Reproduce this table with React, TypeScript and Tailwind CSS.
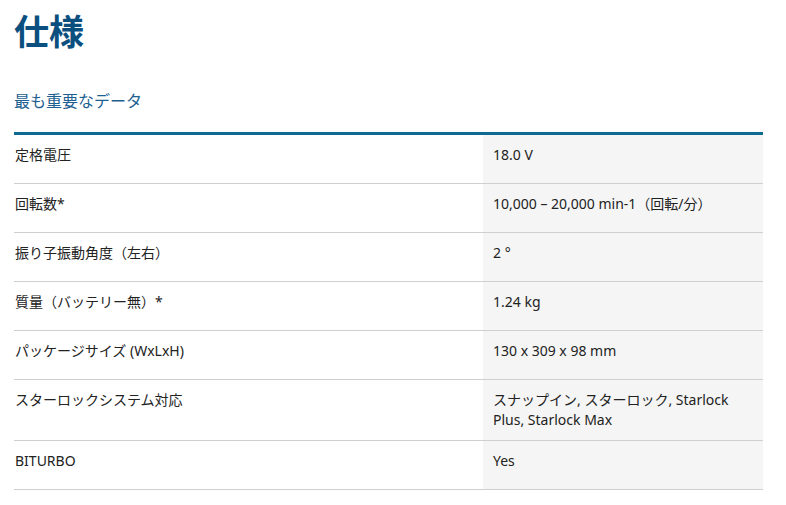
const rows: { label: string; value: string }[] = [
	{ label: "定格電圧", value: "18.0 V" },
	{ label: "回転数*", value: "10,000 – 20,000 min-1（回転/分）" },
	{ label: "振り子振動角度（左右）", value: "2 °" },
	{ label: "質量（バッテリー無）*", value: "1.24 kg" },
	{ label: "パッケージサイズ (WxLxH)", value: "130 x 309 x 98 mm" },
	{ label: "スターロックシステム対応", value: "スナップイン, スターロック, Starlock Plus, Starlock Max" },
	{ label: "BITURBO", value: "Yes" },
];

export default function App() {
	return (
		<div
			className="min-h-[505px] bg-white px-[14px] pt-[8px] text-[#222]"
			style={{ fontFamily: '"Noto Sans", "Noto Sans CJK JP", sans-serif' }}
		>
			<h1 className="text-[35px] font-bold leading-[48px] text-[#0b4f7f]">仕様</h1>
			<h2 className="mt-[34px] text-[16px] leading-[22px] text-[#1d5f91]">最も重要なデータ</h2>
			<div className="mt-[20px] w-[749px] border-t-[3px] border-[#0f6a91]">
				{rows.map(row => (
					<div key={row.label} className="grid grid-cols-[469px_280px] border-b border-[#cfcfcf]">
						<div className="min-h-[48px] pb-[10px] pl-[1px] pt-[10px] text-[14px] leading-[20px]">
							{row.label}
						</div>
						<div className="min-h-[48px] bg-[#f5f5f5] pb-[10px] pl-[10px] pr-[6px] pt-[10px] text-[14px] leading-[20px]">
							{row.value}
						</div>
					</div>
				))}
			</div>
		</div>
	);
}
